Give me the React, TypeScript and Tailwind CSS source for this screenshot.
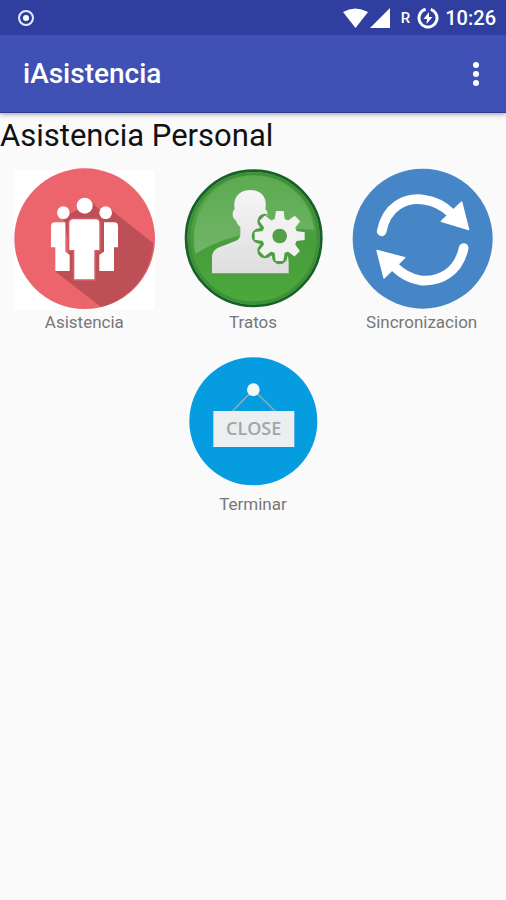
import type { ReactNode } from "react";

function PeopleIcon() {
  return (
    <svg viewBox="40 24 426 426" className="size-[142px]" aria-hidden="true">
      <rect x="44" y="30" width="423" height="420" fill="#fff" />
      <circle cx="255" cy="236" r="211" fill="#ec646c" />
      <path d="M330 146 L461 250 A211 211 0 0 1 304 441 L166 334 L210 270 L186 146 L215 160 L275 125 L310 160 Z" fill="#bd5057" />
      <g fill="#fff">
        <circle cx="191" cy="158" r="19" />
        <circle cx="318" cy="158" r="19" />
        <path d="M166 187 H197 V275 L210 284 V333 H167 V262 H154 V199 Q154 187 166 187 Z" />
        <path d="M344 187 H313 V275 L299 284 V333 H343 V262 H355 V199 Q355 187 344 187 Z" />
      </g>
      <path d="M222 178 H287 Q299 178 299 190 V270 H284 V358 H224 V270 H209 V190 Q209 178 222 178 Z" fill="#fff" stroke="#d65a62" strokeWidth="10" paintOrder="stroke" />
      <circle cx="255" cy="137" r="24" fill="#fff" />
    </svg>
  );
}

function WorkerIcon() {
  return (
    <svg viewBox="36 24 426 426" className="size-[142px]" aria-hidden="true">
      <defs>
        <linearGradient id="green" x1="0" y1="0" x2="0" y2="1">
          <stop offset="0" stopColor="#5aae50" />
          <stop offset="0.55" stopColor="#489c3c" />
          <stop offset="1" stopColor="#4caa3c" />
        </linearGradient>
        <linearGradient id="gloss" x1="0" y1="0" x2="0" y2="1">
          <stop offset="0" stopColor="#5cab52" />
          <stop offset="1" stopColor="#72b468" />
        </linearGradient>
        <linearGradient id="silver" x1="0" y1="0" x2="0" y2="1">
          <stop offset="0" stopColor="#f5f5f5" />
          <stop offset="1" stopColor="#dedee0" />
        </linearGradient>
        <clipPath id="person">
          <path d="M126 342 V292 Q126 270 148 262 L198 242 Q212 236 211 218 V80 H290 V225 L330 225 H358 V342 Z" />
        </clipPath>
      </defs>
      <circle cx="251" cy="235" r="203" fill="url(#green)" stroke="#17602a" strokeWidth="8" />
      <circle cx="251" cy="235" r="194" fill="none" stroke="#3f9039" strokeWidth="9" />
      <path d="M76 282 C52 155 135 52 251 52 C352 52 425 124 432 210 C330 201 185 211 76 282 Z" fill="url(#gloss)" />
      <path d="M126 340 V292 Q126 270 148 262 L198 242 Q212 236 211 218 V202 Q201 194 197 181 Q187 176 188 160 Q188 151 194 148 C187 112 209 90 241 90 C274 90 293 112 286 148 Q293 151 292 162 Q292 177 283 182 Q278 195 270 203 V225 L330 265 Q356 279 356 306 V340 Z" fill="url(#silver)" />
      <g stroke="#4d9f43" strokeWidth="27" strokeLinejoin="round" clipPath="url(#person)">
        <circle cx="329" cy="228" r="50" />
        <path d="M329 228 V290 M329 228 H268 M329 228 L285 184 M329 228 L285 272 M329 228 L373 272" strokeWidth="46" strokeLinecap="round" />
      </g>
      <g fill="#f1f1f1">
        {[0, 45, 90, 135, 180, 225, 270, 315].map((angle) => (
          <path key={angle} d="M318 153 H341 L345 184 H313 Z" transform={`rotate(${angle} 329 228)`} />
        ))}
        <circle cx="329" cy="228" r="53" />
      </g>
      <circle cx="329" cy="228" r="22" fill="#519f48" />
    </svg>
  );
}

function SyncIcon() {
  return (
    <svg viewBox="44 24 426 426" className="size-[142px]" aria-hidden="true">
      <circle cx="259" cy="236" r="210" fill="#4685c6" />
      <g fill="none" stroke="#fff" strokeWidth="29" strokeLinecap="round">
        <path d="M136 214 C150 140 206 111 263 119 Q310 125 345 160" />
        <path d="M382 264 C367 334 314 367 251 361 Q209 354 176 322" />
      </g>
      <g fill="#fff" stroke="#fff" strokeWidth="4" strokeLinejoin="round">
        <path d="M376 126 L397 209 L315 184 Z" />
        <path d="M122 271 L205 293 L143 354 Z" />
      </g>
    </svg>
  );
}

function CloseIcon() {
  return (
    <svg viewBox="36 15 426 426" className="size-[142px]" aria-hidden="true">
      <circle cx="250" cy="229" r="192" fill="#069ce0" />
      <path d="M188 198 L250 134 L315 198" fill="none" stroke="#8ea9b5" strokeWidth="5" />
      <circle cx="250" cy="134" r="19" fill="#f1f7fa" />
      <rect x="130" y="198" width="243" height="108" fill="#eceeef" />
      <text x="251" y="269" textAnchor="middle" fill="#a0a5a9" fontSize="54" fontWeight="600" fontFamily="'Open Sans', sans-serif">CLOSE</text>
    </svg>
  );
}

function Tile({ label, children }: { label: string; children: ReactNode }) {
  return (
    <button type="button" className="flex flex-col items-center gap-0.5">
      {children}
      <span className="text-[17px] leading-5 text-[#777]">{label}</span>
    </button>
  );
}

export default function App() {
  return (
    <div className="min-h-screen bg-[#fafafa] font-['Roboto',sans-serif]">
      <header className="relative bg-[#3f51b5] text-white shadow-[0_1px_5px_rgba(0,0,0,0.4)]">
        <div className="flex h-[35px] items-center bg-[#303f9f] pr-2.5 pl-[18px]">
          <svg viewBox="0 0 16 16" className="size-4" aria-hidden="true">
            <circle cx="8" cy="8" r="7" fill="none" stroke="#e8ebff" strokeWidth="2" />
            <circle cx="8" cy="8" r="3" fill="#fff" />
          </svg>
          <div className="ml-auto flex items-center">
            <svg viewBox="0 0 48 20" className="h-5 w-12" fill="#fff" aria-hidden="true">
              <path d="M0 4 Q12 -3 25 4 L12.500 20 Z" />
              <path d="M47 0 V20 H27 Z" />
            </svg>
            <span className="ml-2.5 text-[15px] leading-5 font-medium">R</span>
            <svg viewBox="0 0 22 22" className="ml-[7px] size-[22px]" aria-hidden="true">
              <circle cx="11" cy="11" r="9" fill="none" stroke="#fff" strokeWidth="3" strokeDasharray="51 5.500" transform="rotate(-72 11 11)" />
              <path d="M12 5 L6.500 12 H10 L9.500 17 L15.500 10 H12 Z" fill="#fff" />
            </svg>
            <span className="ml-1.5 text-[20px] leading-6 font-medium">10:26</span>
          </div>
        </div>
        <div className="flex h-[78px] items-center justify-between border-b border-[#2c3c96] pr-[18px] pl-[23px]">
          <h1 className="text-[28px] leading-8 font-medium">iAsistencia</h1>
          <button type="button" aria-label="Más opciones" className="flex h-10 w-6 items-center justify-center">
            <svg viewBox="0 0 6 24" className="h-6 w-1.5" fill="#fff" aria-hidden="true">
              <circle cx="3" cy="3" r="3" />
              <circle cx="3" cy="12" r="3" />
              <circle cx="3" cy="21" r="3" />
            </svg>
          </button>
        </div>
      </header>
      <main>
        <h2 className="text-[31px] leading-[46px] text-[#111]">Asistencia Personal</h2>
        <div className="mt-[9px] grid grid-cols-3 gap-y-[18px]">
          <Tile label="Asistencia"><PeopleIcon /></Tile>
          <Tile label="Tratos"><WorkerIcon /></Tile>
          <Tile label="Sincronizacion"><SyncIcon /></Tile>
          <div className="col-start-2 grid">
            <Tile label="Terminar"><CloseIcon /></Tile>
          </div>
        </div>
      </main>
    </div>
  );
}
